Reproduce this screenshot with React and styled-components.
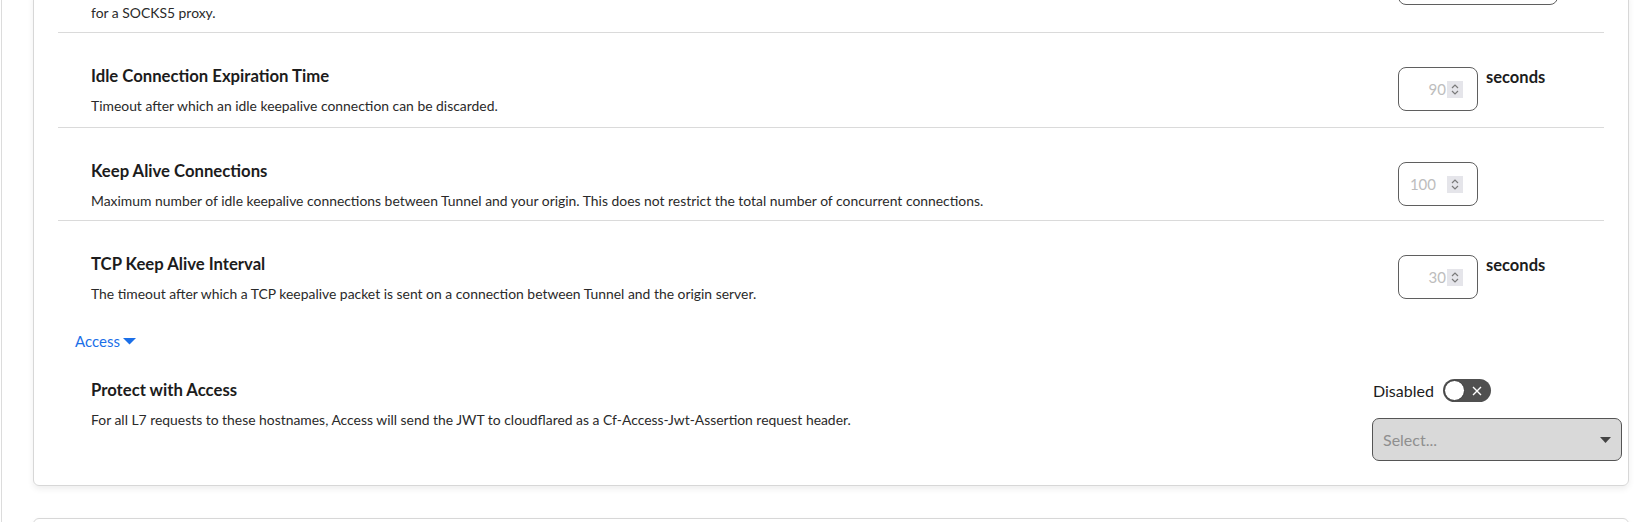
import styled, { createGlobalStyle } from "styled-components";

const GlobalStyle = createGlobalStyle`
  body {
    margin: 0;
    background: #fff;
    font-family: Lato, "Open Sans", sans-serif;
    color: #1f1f1f;
  }
`;

const Page = styled.div`
  display: flow-root;
  min-height: 100vh;
  overflow: hidden;
  margin-left: 1px;
  border-left: 1px solid #dcdcdc;
  padding: 0 23px 0 31px;
`;

const Card = styled.div`
  margin-top: ${(p) => p.$top || 0}px;
  border: 1px solid #d7d7d7;
  border-radius: 6px;
  padding: 0 24px 24px;
  box-shadow: 0 3px 6px rgba(0, 0, 0, 0.07);
  min-height: ${(p) => p.$minH || 0}px;
`;

const Row = styled.div`
  display: grid;
  grid-template-columns: 1fr ${(p) => p.$ctl || 206}px;
  padding: ${(p) => p.$pt ?? 33}px 0 ${(p) => p.$pb ?? 10}px 33px;
  border-bottom: ${(p) => (p.$last ? "none" : "1px solid #dadada")};
`;

const Title = styled.div`
  font-size: 16.7px;
  line-height: 20px;
  font-weight: 700;
  color: #1c1c1c;
`;

const Desc = styled.div`
  margin-top: 9px;
  font-size: 13.9px;
  line-height: 22px;
  color: #2a2a2a;
`;

const Controls = styled.div`
  align-self: start;
  margin-top: ${(p) => p.$mt ?? 1}px;
  display: flex;
  flex-direction: ${(p) => (p.$column ? "column" : "row")};
  align-items: flex-start;
  gap: ${(p) => (p.$column ? 16 : 8)}px;
  width: ${(p) => (p.$w ? `${p.$w}px` : "auto")};
`;

const NumberBox = styled.div`
  box-sizing: border-box;
  width: 80px;
  height: 44px;
  border: 1px solid #5f5f5f;
  border-radius: 8px;
  display: flex;
  align-items: center;
  justify-content: flex-end;
  padding-right: 14px;
`;

const Value = styled.span`
  font-size: 15px;
  color: #bdbdbd;
  margin-right: ${(p) => p.$gap || 1}px;
`;

const Spinner = styled.span`
  display: flex;
  width: 16px;
  height: 17px;
  background: #e5e5ea;
`;

const TextBox = styled.div`
  box-sizing: border-box;
  width: 160px;
  height: 44px;
  border: 1px solid #5f5f5f;
  border-radius: 8px;
`;

const Unit = styled.span`
  font-size: 16.5px;
  line-height: 20px;
  font-weight: 700;
  color: #1c1c1c;
`;

const SectionToggle = styled.button`
  display: inline-flex;
  align-items: center;
  gap: 3px;
  margin: 16px 0 0 17px;
  padding: 0;
  border: none;
  background: none;
  font-family: inherit;
  font-size: 15px;
  line-height: 20px;
  color: #1b6fe8;
  cursor: pointer;
`;

const SwitchRow = styled.div`
  display: flex;
  align-items: center;
  gap: 9px;
  height: 23px;
  padding-left: 1px;
  font-size: 16px;
  color: #1c1c1c;
`;

const Switch = styled.span`
  box-sizing: border-box;
  display: inline-flex;
  align-items: center;
  width: 48px;
  height: 23px;
  padding: 1px;
  border-radius: 12px;
  background: #505050;
`;

const Knob = styled.span`
  box-sizing: border-box;
  width: 21px;
  height: 21px;
  border-radius: 50%;
  background: #fff;
  border: 1px solid #3a3a3a;
`;

const Cross = styled.svg`
  margin-left: auto;
  margin-right: 8px;
`;

const SelectBox = styled.div`
  box-sizing: border-box;
  width: 250px;
  height: 43px;
  border: 1px solid #555;
  border-radius: 7px;
  background: #d9d9d9;
  display: flex;
  align-items: center;
  justify-content: space-between;
  padding: 0 10px;
  font-size: 16px;
  color: #8f8f8f;
`;

function Stepper() {
  return (
    <Spinner>
      <svg width="16" height="17" viewBox="0 0 16 17">
        <path d="M5 7 L8 4 L11 7 M5 10 L8 13 L11 10" fill="none" stroke="#7a7a7a" strokeWidth="1.2" />
      </svg>
    </Spinner>
  );
}

function NumberSetting({ title, desc, value, gap, unit, last, pb }) {
  return (
    <Row $last={last} $pb={pb}>
      <div>
        <Title>{title}</Title>
        <Desc>{desc}</Desc>
      </div>
      <Controls>
        <NumberBox>
          <Value $gap={gap}>{value}</Value>
          <Stepper />
        </NumberBox>
        {unit && <Unit>{unit}</Unit>}
      </Controls>
    </Row>
  );
}

export default function App() {
  return (
    <>
      <GlobalStyle />
      <Page>
        <Card $top={-8}>
          {/* tail of the proxy type row, scrolled mostly out of view */}
          <Row $pt={0} $pb={8}>
            <Desc>for a SOCKS5 proxy.</Desc>
            <Controls $mt={-32}>
              <TextBox />
            </Controls>
          </Row>
          <NumberSetting
            title="Idle Connection Expiration Time"
            desc="Timeout after which an idle keepalive connection can be discarded."
            value="90"
            unit="seconds"
          />
          <NumberSetting
            title="Keep Alive Connections"
            desc="Maximum number of idle keepalive connections between Tunnel and your origin. This does not restrict the total number of concurrent connections."
            value="100"
            gap={11}
            pb={8}
          />
          <NumberSetting
            title="TCP Keep Alive Interval"
            desc="The timeout after which a TCP keepalive packet is sent on a connection between Tunnel and the origin server."
            value="30"
            unit="seconds"
            last
          />
          <SectionToggle>
            Access
            <svg width="13" height="7" viewBox="0 0 13 7">
              <path d="M0 0 H13 L6.5 6.5 Z" fill="#1b6fe8" />
            </svg>
          </SectionToggle>
          <Row $ctl={232} $pt={29} $pb={0} $last>
            <div>
              <Title>Protect with Access</Title>
              <Desc>
                For all L7 requests to these hostnames, Access will send the JWT to cloudflared as a Cf-Access-Jwt-Assertion request header.
              </Desc>
            </div>
            <Controls $mt={-1} $column $w={250}>
              <SwitchRow>
                Disabled
                <Switch>
                  <Knob />
                  <Cross width="10" height="10" viewBox="0 0 10 10">
                    <path d="M1 1 L9 9 M9 1 L1 9" stroke="#fff" strokeWidth="1.4" />
                  </Cross>
                </Switch>
              </SwitchRow>
              <SelectBox>
                Select...
                <svg width="11" height="6" viewBox="0 0 11 6">
                  <path d="M0 0 H11 L5.5 6 Z" fill="#444" />
                </svg>
              </SelectBox>
            </Controls>
          </Row>
        </Card>
        <Card style={{ marginTop: 32 }} $minH={120} />
      </Page>
    </>
  );
}
